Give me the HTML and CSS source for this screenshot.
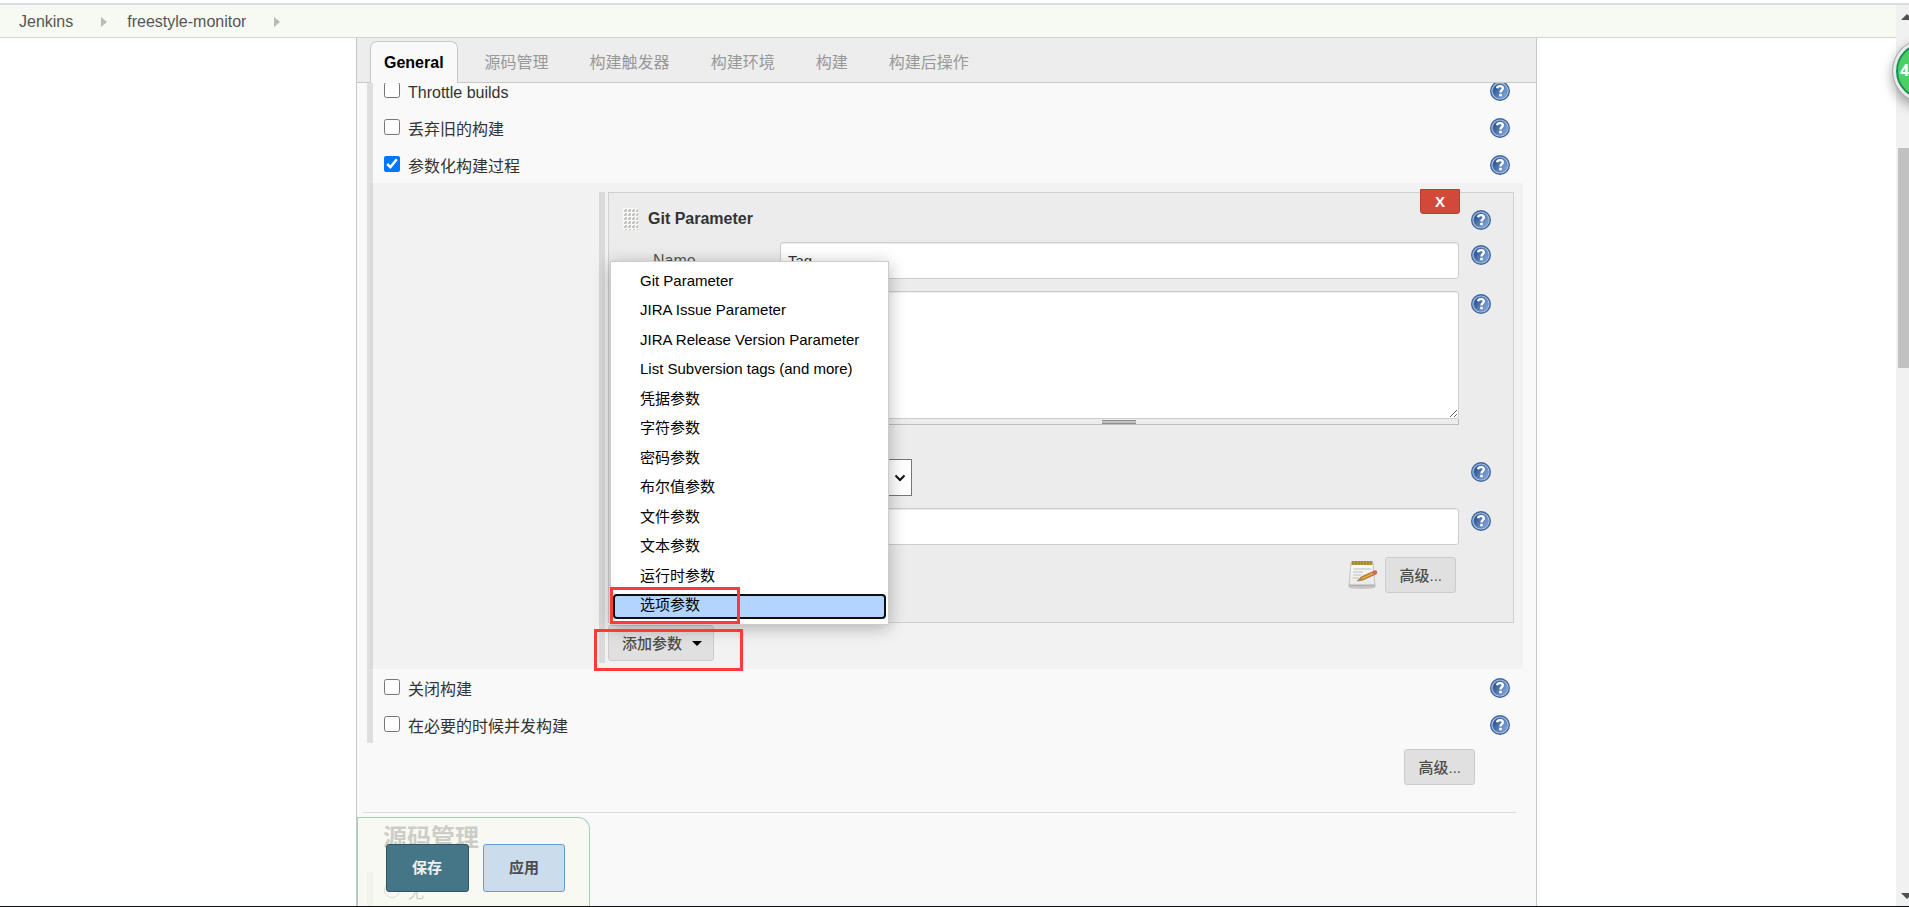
FILE: index.html
```html
<!DOCTYPE html>
<html lang="zh-CN">
<head>
<meta charset="utf-8">
<title>freestyle-monitor Config [Jenkins]</title>
<link rel="stylesheet" href="styles.css">
</head>
<body>
<svg class="defs" aria-hidden="true">
  <defs>
    <linearGradient id="helpFill" x1="0" y1="0" x2="1" y2="0.6">
      <stop offset="0.1" stop-color="#1f4b8d"/>
      <stop offset="1" stop-color="#7fa2d2"/>
    </linearGradient>
    <symbol id="help" viewBox="0 0 20 20">
      <circle cx="10" cy="10" r="9.3" fill="#b4c7e1" stroke="#3f669f" stroke-width="1.4"/>
      <circle cx="10" cy="10" r="7.300" fill="url(#helpFill)" stroke="#5f83b6" stroke-width="0.600"/>
      <path d="M7 7.300C7.300 5.700 8.500 5.100 10 5.100c1.700 0 2.800 0.800 2.800 2.200 0 1.900-2.300 2-2.300 4.200" fill="none" stroke="#fff" stroke-width="2.400"/>
      <rect x="9.200" y="12.800" width="2.600" height="2.500" fill="#fff"/>
    </symbol>
  </defs>
</svg>
<div class="top-line"></div>
<div class="viewport">
  <div class="page">
    <nav class="breadcrumb">
      <a href="#">Jenkins</a><span class="crumb-arrow"></span>
      <a href="#">freestyle-monitor</a><span class="crumb-arrow"></span>
    </nav>
    <main class="panel">
      <div class="tabs" role="tablist">
        <button class="tab active" role="tab">General</button>
        <button class="tab" role="tab">源码管理</button>
        <button class="tab" role="tab">构建触发器</button>
        <button class="tab" role="tab">构建环境</button>
        <button class="tab" role="tab">构建</button>
        <button class="tab" role="tab">构建后操作</button>
      </div>
      <div class="config">
        <div class="group scrolled">
          <div class="option"><input type="checkbox" id="throttle"><label for="throttle">Throttle builds</label><svg class="help"><use href="#help"/></svg></div>
          <div class="option"><input type="checkbox" id="discard"><label for="discard">丢弃旧的构建</label><svg class="help"><use href="#help"/></svg></div>
          <div class="option"><input type="checkbox" id="params" checked><label for="params">参数化构建过程</label><svg class="help"><use href="#help"/></svg></div>
          <div class="nested">
            <div class="param-list">
              <section class="param">
                <button class="delete">X</button>
                <div class="row title-row">
                  <h3 class="param-title">
                    <svg class="grip" viewBox="0 0 15 22" aria-hidden="true">
                      <defs><pattern id="dots" width="4" height="4" patternUnits="userSpaceOnUse"><rect width="4" height="4" fill="#f8f8f6"/><path d="M1 3h2V1" fill="none" stroke="#b9b9b4" stroke-width="1.500"/></pattern></defs>
                      <rect width="15" height="22" fill="url(#dots)"/>
                    </svg>
                    Git Parameter
                  </h3>
                  <svg class="help"><use href="#help"/></svg>
                </div>
                <div class="row">
                  <label class="name" for="pname">Name</label>
                  <input class="text" id="pname" type="text" value="Tag">
                  <svg class="help"><use href="#help"/></svg>
                </div>
                <div class="row">
                  <div class="field">
                    <textarea class="text area" aria-label="Description"></textarea>
                    <div class="drag"><span></span></div>
                  </div>
                  <svg class="help"><use href="#help"/></svg>
                </div>
                <div class="row spaced">
                  <div class="field select-wrap">
                    <select class="select" aria-label="Parameter Type"><option></option></select>
                    <svg class="chevron" viewBox="0 0 12 8" aria-hidden="true"><path d="M1.500 1.500L6 6l4.500-4.500" fill="none" stroke="#111" stroke-width="2"/></svg>
                  </div>
                  <svg class="help"><use href="#help"/></svg>
                </div>
                <div class="row">
                  <input class="text field" type="text" aria-label="Default Value">
                  <svg class="help"><use href="#help"/></svg>
                </div>
                <div class="row">
                  <div class="field advanced-row">
                    <svg class="notepad" viewBox="0 0 30 30" aria-hidden="true">
                      <defs><linearGradient id="paper" x1="0" y1="0" x2="0" y2="1"><stop offset="0" stop-color="#fdfdfd"/><stop offset="1" stop-color="#e6e6e6"/></linearGradient></defs>
                      <ellipse cx="14" cy="27.500" rx="13" ry="1.500" fill="#c8c8c8"/>
                      <path d="M3 3h22l2 22v2H1v-2z" fill="url(#paper)" stroke="#c4c4c4"/>
                      <path d="M1 25.500h26" stroke="#b0b0b0" stroke-width="2"/>
                      <rect x="3.500" y="1" width="21" height="4" fill="#b7a23c"/>
                      <path d="M5 1v4M8 1v4M11 1v4M14 1v4M17 1v4M20 1v4M23 1v4" stroke="#8d7a20"/>
                      <path d="M5.500 9h18M5 12h10M5 15h8M4.500 18h6" stroke="#cfcfcf" stroke-width="1.300"/>
                      <path d="M9.500 21l3.500-4 12-5.500 2 3L15 20z" fill="#d08f30" stroke="#94672a" stroke-width="0.700"/>
                      <path d="M14 18.500l12-5.500" stroke="#e8b25a"/>
                      <path d="M9.500 21l3.500-4 1.500 3z" fill="#b08a55"/>
                      <circle cx="27" cy="12.500" r="2.200" fill="#e0605a"/>
                    </svg>
                    <button class="btn">高级...</button>
                  </div>
                </div>
              </section>
              <div class="add">
                <button class="btn add-btn">添加参数<span class="caret"></span></button>
                <div class="menu" role="menu">
                  <a href="#" role="menuitem">Git Parameter</a>
                  <a href="#" role="menuitem">JIRA Issue Parameter</a>
                  <a href="#" role="menuitem">JIRA Release Version Parameter</a>
                  <a href="#" role="menuitem">List Subversion tags (and more)</a>
                  <a href="#" role="menuitem">凭据参数</a>
                  <a href="#" role="menuitem">字符参数</a>
                  <a href="#" role="menuitem">密码参数</a>
                  <a href="#" role="menuitem">布尔值参数</a>
                  <a href="#" role="menuitem">文件参数</a>
                  <a href="#" role="menuitem">文本参数</a>
                  <a href="#" role="menuitem">运行时参数</a>
                  <a href="#" role="menuitem" class="current">选项参数</a>
                </div>
                <span class="mark mark-item"></span>
                <span class="mark mark-button"></span>
              </div>
            </div>
          </div>
          <div class="option"><input type="checkbox" id="disable"><label for="disable">关闭构建</label><svg class="help"><use href="#help"/></svg></div>
          <div class="option"><input type="checkbox" id="concurrent"><label for="concurrent">在必要的时候并发构建</label><svg class="help"><use href="#help"/></svg></div>
        </div>
        <div class="general-advanced"><button class="btn">高级...</button></div>
        <h2 class="section-title">源码管理</h2>
        <div class="group">
          <div class="option"><input type="radio" id="none" name="scm"><label for="none">无</label></div>
        </div>
      </div>
      <div class="save-bar">
        <button class="action save">保存</button>
        <button class="action apply">应用</button>
      </div>
    </main>
  </div>
  <div class="scrollbar" aria-hidden="true">
    <span class="arrow up"></span>
    <span class="thumb"></span>
    <span class="arrow down"></span>
  </div>
  <div class="bubble">4</div>
</div>
</body>
</html>
```
FILE: styles.css
```css
* { box-sizing: border-box; }

body {
  margin: 0;
  height: 100vh;
  overflow: hidden;
  display: flex;
  flex-direction: column;
  background: #fff;
  border-bottom: 1px solid #0b0b14;
  color: #333;
  font: 16px/24px "Liberation Sans", "Noto Sans CJK SC", sans-serif;
}

button, input, textarea, select { font: inherit; color: inherit; }
a { color: inherit; text-decoration: none; }
.defs { position: absolute; width: 0; height: 0; }

.top-line { flex: none; height: 5px; border-bottom: 2px solid #dcdce4; }

.viewport { position: relative; flex: 1; min-height: 0; display: flex; overflow: hidden; }
.page { flex: 1; min-width: 0; display: flex; flex-direction: column; }

.breadcrumb {
  flex: none;
  height: 33px;
  display: flex;
  align-items: center;
  padding: 2px 0 0 19px;
  background: #f6faf2;
  border-bottom: 1px solid #d3d4d0;
  color: #555;
}
.crumb-arrow {
  margin: 0 20px 0 28px;
  border: 5px solid transparent;
  border-left: 6px solid #b9bbb7;
  border-right: 0;
}

.panel {
  position: relative;
  flex: 1;
  min-height: 0;
  margin: 0 359px 0 356px;
  display: flex;
  flex-direction: column;
  background: #f9f9f9;
  border: 1px solid #c8c8c8;
  border-width: 0 1px;
}

.tabs {
  flex: none;
  height: 45px;
  display: flex;
  gap: 13px;
  padding: 3px 13px 0;
  background: #ededed;
  border-bottom: 1px solid #c8c8c8;
}
.tab {
  height: 42px;
  padding: 0 13px;
  background: none;
  border: 1px solid transparent;
  border-bottom: 0;
  color: #999;
}
.tab.active {
  background: #f9f9f9;
  border-color: #c8c8c8;
  border-radius: 7px 7px 0 0;
  color: #000;
  font-weight: bold;
}

.config { flex: 1; min-height: 0; overflow: hidden; }
.group { margin: 0 13px 0 10px; border-left: 6px solid #dfdfdf; }
.group.scrolled { margin-top: -11px; }

.option { display: flex; align-items: center; height: 37px; padding: 0 13px 0 11px; }
.option input { width: 16px; height: 16px; margin: 0 8px 2px 0; }
.option label { flex: 1; padding-top: 5px; }
.help { flex: none; width: 20px; height: 20px; }

.nested {
  margin-left: -3px;
  border-left: 3px solid #d9d9d9;
  padding: 9px 9px 6px 226px;
  background: #f2f2f2;
}
.param-list { border-left: 6px solid #dadada; padding: 0 0 2px 3px; }

.param {
  position: relative;
  display: flex;
  flex-direction: column;
  gap: 12px;
  padding: 14px 22px 29px 14px;
  background: #ececec;
  border: 1px solid #d0d0d0;
}
.delete {
  position: absolute;
  top: -4px;
  right: 53px;
  width: 40px;
  height: 25px;
  padding: 0;
  background: #d24939;
  border: 1px solid #b94030;
  border-radius: 0 0 3px 3px;
  color: #fff;
  font-size: 15px;
  font-weight: bold;
}

.row { display: grid; grid-template-columns: 157px 1fr 32px; align-items: start; }
.row.spaced { margin-top: 22px; }
.row.title-row { height: 23px; }
.row .help { margin: 3px 0 0 12px; }
.param-title {
  grid-column: 1 / 3;
  display: flex;
  align-items: center;
  gap: 10px;
  margin: 0;
  font-size: 16px;
}
.grip { width: 15px; height: 22px; }
.name { padding-left: 30px; line-height: 37px; color: #555; }
.field { grid-column: 2; }
.text {
  display: block;
  width: 100%;
  height: 37px;
  padding: 6px 7px;
  background: #fff;
  border: 1px solid #ccc;
  border-radius: 3px;
  box-shadow: inset 0 1px 1px rgba(0, 0, 0, 0.08);
  font-size: 15px;
}
.text.area { height: 128px; }
.drag {
  height: 6px;
  padding-top: 1px;
  border: 1px solid #bbbdb8;
  border-width: 0 1px 1px 0;
}
.drag span {
  display: block;
  width: 34px;
  height: 4px;
  margin: 0 auto;
  background: #c0c4bc;
  border: 1px solid #8c9088;
  border-width: 1px 0;
}
.select-wrap { display: flex; align-items: center; }
.select {
  appearance: none;
  width: 132px;
  height: 37px;
  background: #fff;
  border: 1px solid #767676;
  border-radius: 0;
}
.chevron { width: 12px; height: 8px; margin-left: -18px; pointer-events: none; }

.advanced-row { display: flex; justify-content: flex-end; gap: 7px; padding-right: 3px; }
.notepad { width: 30px; height: 30px; margin-top: 3px; }
.btn {
  height: 36px;
  padding: 1px 13px 0;
  background: #e0e0e0;
  border: 1px solid #ccc;
  border-radius: 3px;
  color: #4d4d4d;
  font-size: 15px;
  font-weight: 500;
}

.add { position: relative; padding-top: 2px; }
.add-btn { display: flex; align-items: center; gap: 10px; }
.caret { margin-right: -2px; border: 6px solid transparent; border-top-color: #000; border-width: 5px 5px 0; }

.menu {
  position: absolute;
  left: 2px;
  bottom: 36px;
  width: 279px;
  height: 364px;
  display: grid;
  grid-auto-rows: 1fr;
  padding: 5px 0 3px;
  background: #fff;
  border: 1px solid #ccc;
  box-shadow: 0 3px 16px rgba(0, 0, 0, 0.28);
  color: #000;
  font-size: 15px;
}
.menu a { display: flex; align-items: center; padding: 0 0 2px 29px; }
.menu .current {
  background: #b3d4ff;
  border-radius: 6px;
  outline: 2px solid #101010;
  outline-offset: -4px;
  box-shadow: inset 0 0 0 2px #fff;
}

.mark { position: absolute; border: 3px solid #ff3a3a; }
.mark-item { left: 2px; top: -36px; width: 130px; height: 37px; }
.mark-button { left: -14px; top: 6px; width: 149px; height: 42px; }

.general-advanced {
  display: flex;
  justify-content: flex-end;
  margin: 0 20px 0 6px;
  padding: 6px 41px 27px 0;
  border-bottom: 1px solid #dcdcdc;
}
.section-title { margin: 7px 0 16px 26px; font-size: 24px; line-height: 36px; }

.save-bar {
  position: absolute;
  left: 0;
  bottom: 0;
  display: flex;
  gap: 14px;
  padding: 26px 24px 14px 28px;
  background: rgba(247, 249, 239, 0.78);
  border: 1px solid #a8cdb7;
  border-bottom: 0;
  border-radius: 0 12px 0 0;
}
.action { height: 48px; padding: 0 25px; border: 1px solid; border-radius: 3px; font-size: 15px; font-weight: bold; }
.save { padding: 0 26px 0 25px; background: #457688; border-color: #2d5566; color: #f0f0f0; }
.apply { background: #cbdcec; border-color: #6a9cd4; color: #4d4d4d; }

.scrollbar {
  flex: none;
  width: 13px;
  display: flex;
  flex-direction: column;
  padding: 9px 0 7px;
  background: #f1f1f1;
  overflow: hidden;
}
.arrow { width: 12px; margin-left: 5px; border: 6px solid transparent; }
.arrow.up { border-top: 0; border-bottom: 6px solid #505050; }
.arrow.down { margin-top: auto; border-bottom: 0; border-top: 6px solid #505050; }
.thumb { height: 220px; margin: 128px 0 0 2px; background: #c1c1c1; }

.bubble {
  position: absolute;
  top: 38px;
  right: -43px;
  width: 56px;
  height: 56px;
  padding-left: 2px;
  background: #4cd062;
  border: 2px solid #17915c;
  border-radius: 50%;
  box-shadow: 0 0 0 3px #e9e9e9, 0 0 0 4px #aaa, 0 5px 12px 4px rgba(0, 0, 0, 0.35);
  color: #fff;
  font: bold 16px/50px "Open Sans", sans-serif;
}
```
